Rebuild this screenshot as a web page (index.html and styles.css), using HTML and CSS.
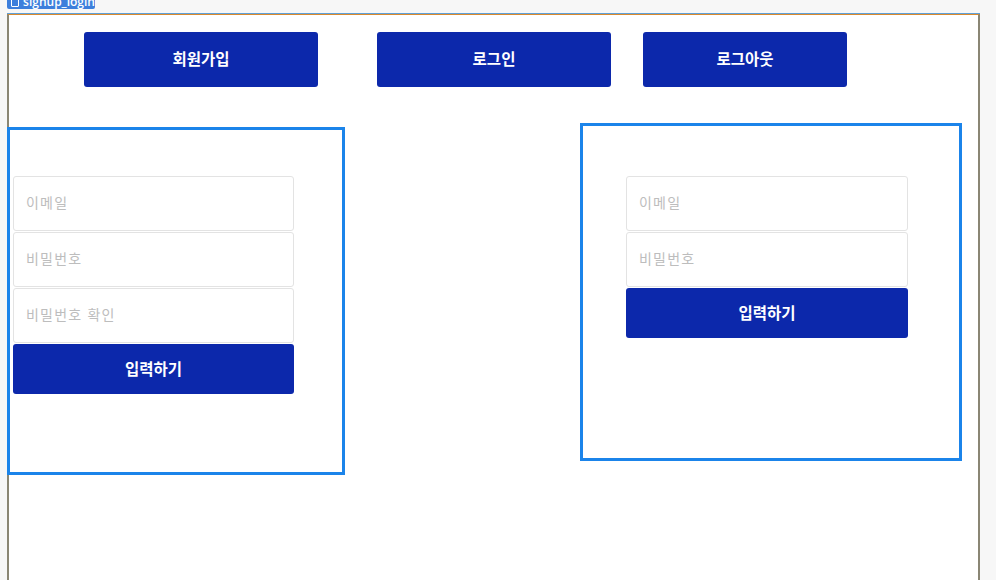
FILE: index.html
```html
<!DOCTYPE html>
<html lang="ko">
<head>
<meta charset="utf-8">
<title>signup_login</title>
<link rel="stylesheet" href="styles.css">
</head>
<body>
<div class="frame-tag"><span class="tag-box"></span><span class="tag-text">signup_login</span></div>
<div class="frame">
  <nav class="nav">
    <button class="btn nav-btn signup">회원가입</button>
    <button class="btn nav-btn login">로그인</button>
    <button class="btn nav-btn logout">로그아웃</button>
  </nav>
  <div class="panels">
    <form class="panel panel-signup">
      <input class="field" type="text" placeholder="이메일">
      <input class="field" type="password" placeholder="비밀번호">
      <input class="field" type="password" placeholder="비밀번호 확인">
      <button type="button" class="btn submit">입력하기</button>
    </form>
    <form class="panel panel-login">
      <input class="field" type="text" placeholder="이메일">
      <input class="field" type="password" placeholder="비밀번호">
      <button type="button" class="btn submit">입력하기</button>
    </form>
  </div>
</div>
</body>
</html>
```
FILE: styles.css
```css
* { box-sizing: border-box; }
html, body { margin: 0; padding: 0; }
body {
  background: #f7f7f7;
  font-family: "Noto Sans CJK KR", "Noto Sans", sans-serif;
  height: 580px;
  overflow: hidden;
  position: relative;
}
.frame-tag {
  position: absolute;
  left: 7px;
  top: -5px;
  height: 14px;
  width: 88px;
  background: #3d7fdc;
  border-radius: 2px;
  display: flex;
  align-items: center;
  gap: 4px;
  padding-left: 4px;
  color: #fff;
  font-family: "Open Sans", "Liberation Sans", sans-serif;
  font-size: 12px;
  font-weight: 600;
  line-height: 14px;
}
.tag-box {
  width: 9px;
  height: 9px;
  border: 1px solid #fff;
  border-radius: 1px;
}
.frame {
  margin: 14px 0 0 7px;
  width: 973px;
  height: 566px;
  background: #fff;
  border-left: 2px solid #8a8674;
  border-right: 2px solid #8a8674;
  border-top: 1px solid #d98a2e;
  box-shadow: 0 -1px 0 #5fa0d8;
}
.nav {
  display: flex;
  padding: 17px 0 0 75px;
  height: 72px;
}
.btn {
  border: none;
  background: #0c28ab;
  color: #fff;
  border-radius: 3px;
  font-family: "Noto Sans CJK KR", sans-serif;
  font-weight: 700;
  font-size: 15.5px;
  padding: 0 0 3px;
  cursor: pointer;
}
.nav-btn { height: 55px; width: 234px; }
.nav .login { margin-left: 59px; }
.nav .logout { margin-left: 32px; width: 204px; }
.panels {
  display: flex;
  align-items: flex-start;
}
.panel {
  border: 3px solid #1b84ea;
  display: flex;
  flex-direction: column;
  margin: 0;
}
.panel-signup {
  margin-left: -2px;
  margin-top: 40px;
  width: 338px;
  height: 348px;
  padding: 46px 0 0 3px;
}
.panel-login {
  margin-left: 235px;
  margin-top: 36px;
  width: 382px;
  height: 338px;
  padding: 50px 0 0 43px;
}
.field {
  height: 55px;
  border: 1px solid #e3e3e3;
  border-radius: 3px;
  padding: 0 12px 3px;
  font-family: "Noto Sans CJK KR", sans-serif;
  font-size: 14px;
  letter-spacing: 1.2px;
  margin-bottom: 1px;
  outline: none;
}
.field::placeholder { color: #bdbdbd; }
.panel-signup .field, .panel-signup .submit { width: 281px; }
.panel-login .field, .panel-login .submit { width: 282px; }
.submit { height: 50px; }
```
